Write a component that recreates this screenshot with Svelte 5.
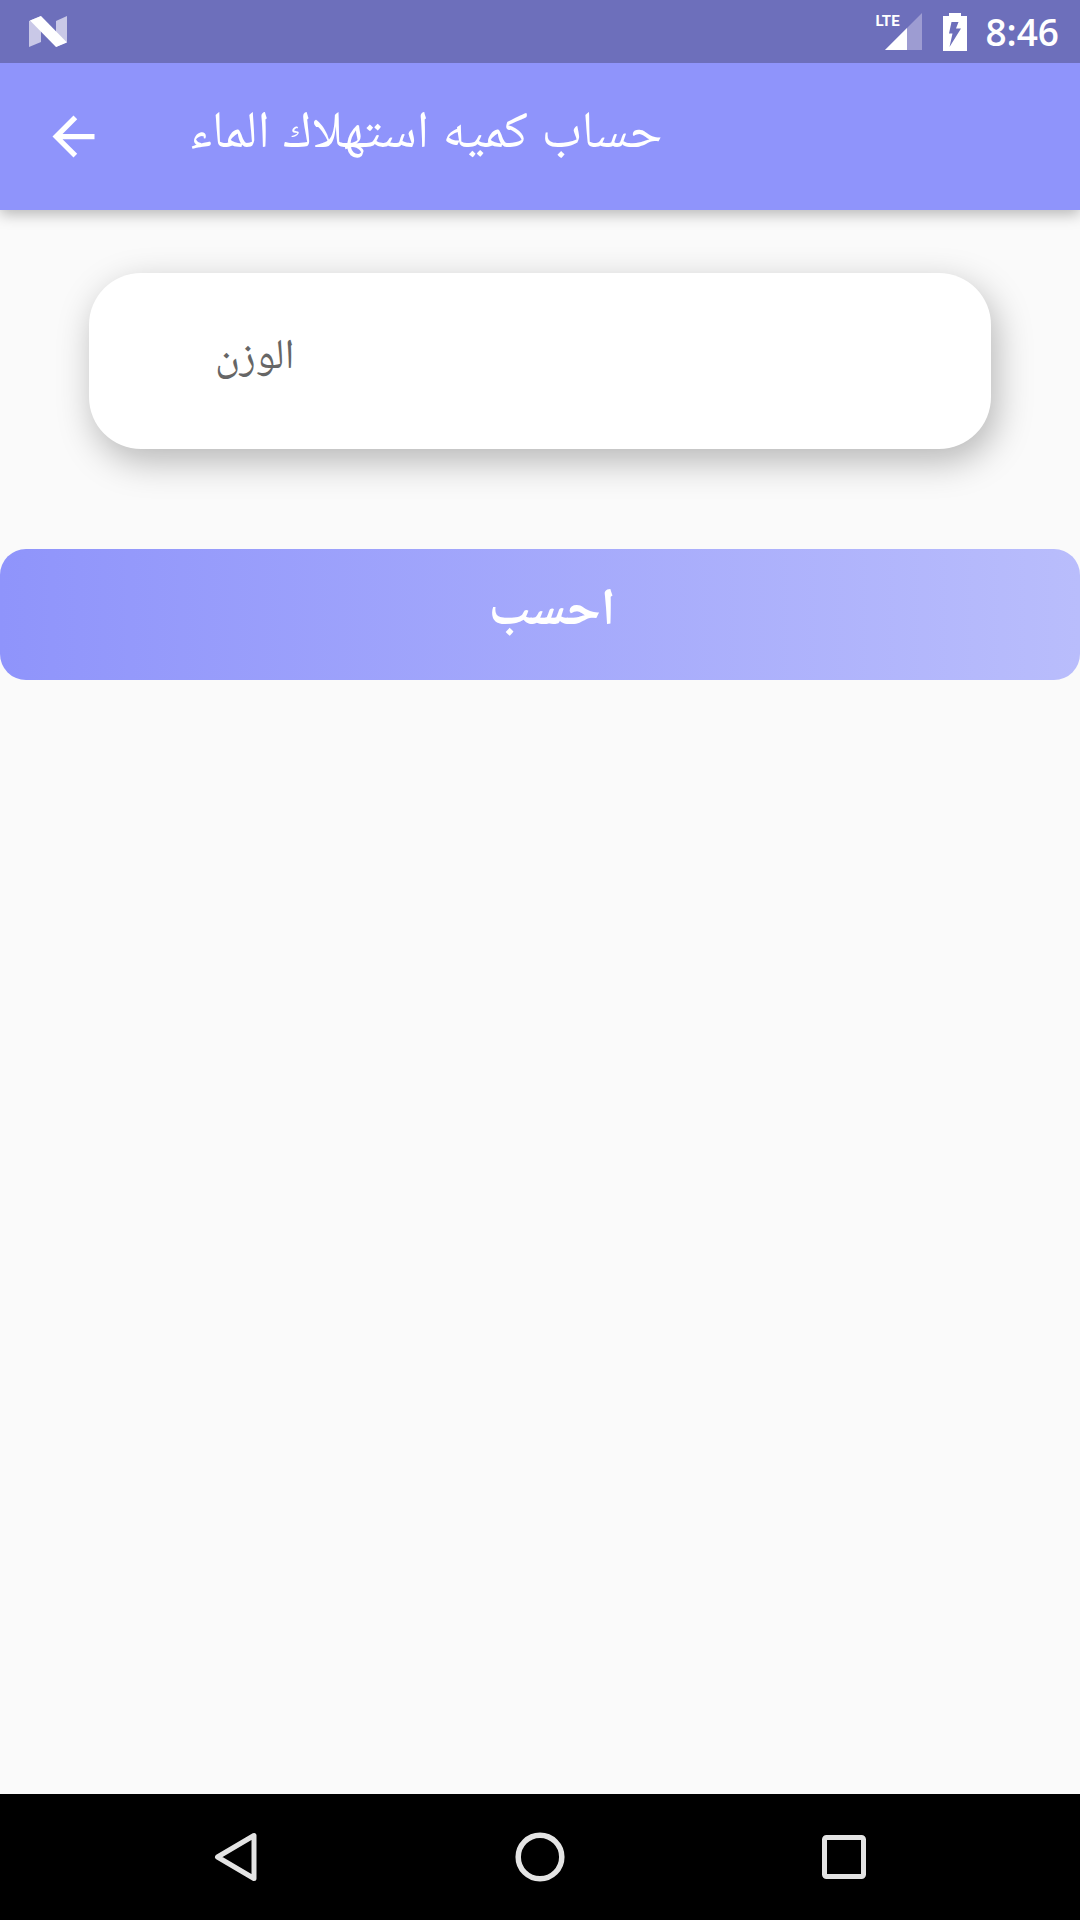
<script>
  let weight = $state('');
</script>

<div class="screen">
  <div class="status">
    <svg class="logo" viewBox="0 0 40 32" aria-hidden="true">
      <path d="M0 5 12 0V26L0 31Z" fill="#c9c8e7" />
      <path d="M27 5 38 0V26L27 31Z" fill="#c9c8e7" />
      <path d="M1 4.5 12 0 38 26.500 27 31Z" fill="#fff" />
    </svg>
    <div class="indicators">
      <div class="signal">
        <span class="lte">LTE</span>
        <svg viewBox="0 0 37 37" aria-hidden="true">
          <path d="M37 0V37H0Z" fill="#9d9cd2" />
          <path d="M22 15V37H0Z" fill="#fff" />
        </svg>
      </div>
      <svg class="battery" viewBox="0 0 24 38" aria-hidden="true">
        <path d="M6 0H18V3H24V38H0V3H6Z" fill="#fff" />
        <path d="M8.500 9H15.500L13 15.500H18L6.500 34 9.500 20.500H6Z" fill="#6d6fbb" />
      </svg>
      <span class="clock">8:46</span>
    </div>
  </div>

  <header>
    <button class="back" aria-label="رجوع">
      <svg viewBox="0 0 24 24" aria-hidden="true">
        <path d="M20 11H7.830l5.590-5.590L12 4l-8 8 8 8 1.410-1.410L7.830 13H20v-2z" fill="#fff" />
      </svg>
    </button>
    <h1 dir="rtl">حساب كميه استهلاك الماء</h1>
  </header>

  <main>
    <div class="card">
      <input type="text" inputmode="decimal" aria-label="الوزن" placeholder="الوزن" bind:value={weight} />
    </div>
    <button class="submit">احسب</button>
  </main>

  <nav>
    <button aria-label="Back">
      <svg viewBox="0 0 56 56" fill="none" stroke="#e4e4e4" stroke-width="5" stroke-linejoin="round">
        <path d="M9.500 28 46 6.500V49.500Z" />
      </svg>
    </button>
    <button aria-label="Home">
      <svg viewBox="0 0 56 56" fill="none" stroke="#e4e4e4" stroke-width="5.500">
        <circle cx="28" cy="28" r="21.800" />
      </svg>
    </button>
    <button aria-label="Recent apps">
      <svg viewBox="0 0 56 56" fill="none" stroke="#e4e4e4" stroke-width="5">
        <rect x="8.500" y="8.500" width="39" height="39" rx="2" />
      </svg>
    </button>
  </nav>
</div>

<style>
  :global(body) {
    margin: 0;
  }
  .screen {
    min-height: 100vh;
    display: flex;
    flex-direction: column;
    background: #fafafa;
    font-family: 'Noto Sans', 'Noto Naskh Arabic', 'DejaVu Sans', sans-serif;
  }
  button {
    border: 0;
    padding: 0;
    background: none;
    font: inherit;
    cursor: pointer;
  }
  svg {
    display: block;
  }
  .status {
    position: relative;
    z-index: 1;
    display: flex;
    justify-content: space-between;
    align-items: center;
    height: 63px;
    padding: 0 21px 0 29px;
    background: #6d6fbb;
    color: #fff;
  }
  .logo {
    width: 40px;
    height: 32px;
  }
  .indicators {
    display: flex;
    align-items: center;
  }
  .signal {
    position: relative;
    padding-left: 10px;
    margin-right: 21px;
  }
  .signal svg {
    width: 37px;
    height: 37px;
  }
  .lte {
    position: absolute;
    left: 0;
    top: 0;
    font: 700 15px/16px Roboto, sans-serif;
  }
  .battery {
    width: 24px;
    height: 38px;
    margin-right: 18px;
  }
  .clock {
    font-family: 'Open Sans', sans-serif;
    font-size: 37px;
    line-height: 63px;
    font-weight: 600;
  }
  header {
    display: flex;
    align-items: center;
    gap: 84px;
    height: 147px;
    padding: 0 42px;
    background: #8f94fb;
    color: #fff;
    box-shadow: 0 4px 14px rgba(0, 0, 0, 0.28);
  }
  .back svg {
    width: 63px;
    height: 63px;
  }
  h1 {
    margin: 0;
    padding-bottom: 20px;
    font-size: 52px;
    line-height: 64px;
    font-weight: 400;
    white-space: nowrap;
  }
  main {
    flex: 1;
    display: flex;
    flex-direction: column;
    gap: 100px;
    padding-top: 63px;
  }
  .card {
    margin: 0 89px;
    border-radius: 52px;
    background: #fff;
    box-shadow: 5px 12px 36px rgba(0, 0, 0, 0.28);
  }
  input {
    display: block;
    box-sizing: border-box;
    width: 100%;
    height: 176px;
    padding: 0 126px 20px;
    border: 0;
    border-radius: 52px;
    outline: 0;
    background: none;
    font: inherit;
    font-size: 42px;
    color: #222;
  }
  input::placeholder {
    color: #666;
    opacity: 1;
  }
  .submit {
    height: 131px;
    padding: 0 0 4px 24px;
    border-radius: 26px;
    background: linear-gradient(90deg, #8f94fb, #b9bdfc);
    color: #fff;
    font-size: 52px;
    font-weight: 700;
  }
  nav {
    display: grid;
    grid-template-columns: repeat(3, 1fr);
    height: 126px;
    padding: 0 84px;
    background: #000;
  }
  nav button {
    display: grid;
    place-items: center;
  }
  nav svg {
    width: 56px;
    height: 56px;
  }
</style>
